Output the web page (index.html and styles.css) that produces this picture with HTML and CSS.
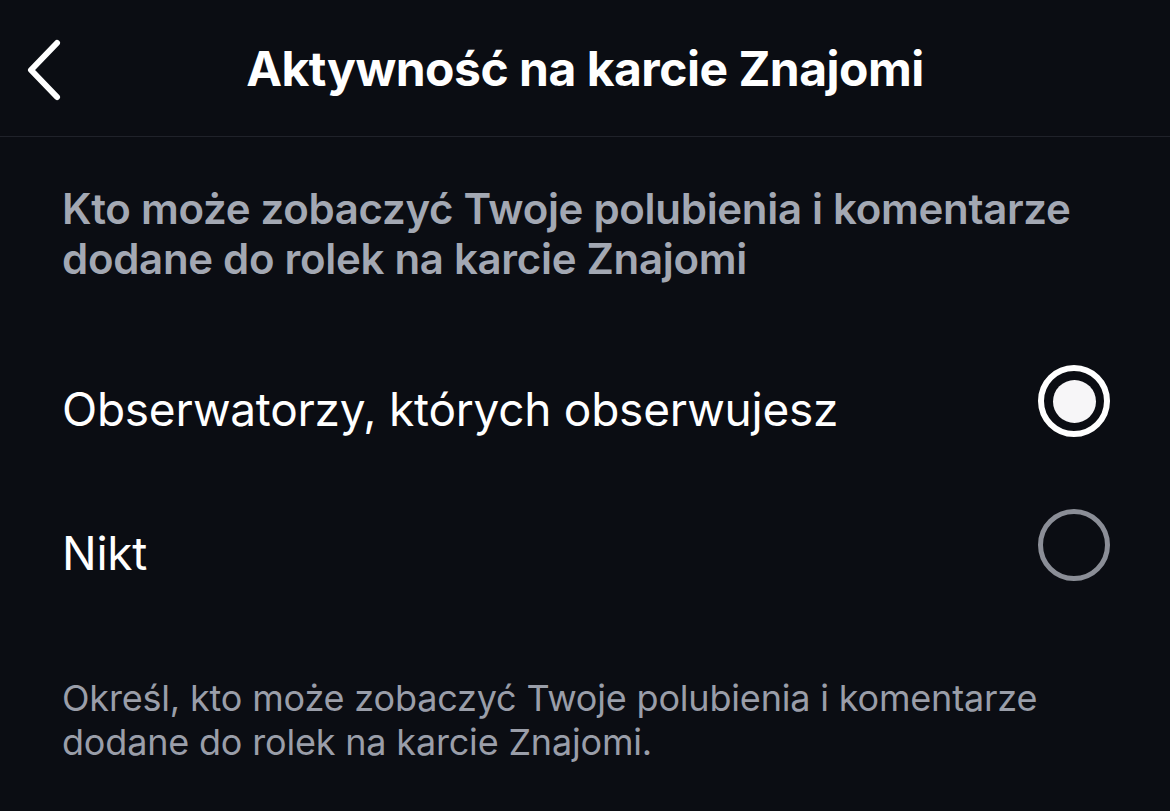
FILE: index.html
```html
<!DOCTYPE html>
<html lang="pl">
<head>
<meta charset="utf-8">
<link rel="stylesheet" href="styles.css">
</head>
<body>
<div class="screen">
  <header class="topbar">
    <button class="back" aria-label="Wstecz">
      <svg width="40" height="64" viewBox="0 0 40 64"><path d="M33 5 L7 32 L33 59" fill="none" stroke="#ffffff" stroke-width="6" stroke-linecap="round" stroke-linejoin="round"/></svg>
    </button>
    <h1 class="title">Aktywność na karcie Znajomi</h1>
  </header>
  <main class="content">
    <p class="question">Kto może zobaczyć Twoje polubienia i komentarze dodane do rolek na karcie Znajomi</p>
    <div class="options">
      <div class="option">
        <span class="label">Obserwatorzy, których obserwujesz</span>
        <span class="radio radio-on"><span class="dot"></span></span>
      </div>
      <div class="option">
        <span class="label">Nikt</span>
        <span class="radio radio-off"></span>
      </div>
    </div>
    <p class="note">Określ, kto może zobaczyć Twoje polubienia i komentarze dodane do rolek na karcie Znajomi.</p>
  </main>
</div>
</body>
</html>
```
FILE: styles.css
```css
html, body {
  margin: 0;
  padding: 0;
  background: #0b0d13;
}
body {
  font-family: Inter, "Noto Sans", "Liberation Sans", sans-serif;
  color: #ffffff;
}
.screen {
  width: 1170px;
  height: 811px;
  overflow: hidden;
}
.topbar {
  height: 136px;
  border-bottom: 1px solid #20222a;
  display: flex;
  align-items: center;
  justify-content: center;
  position: relative;
}
.back {
  position: absolute;
  left: 24px;
  top: 38px;
  background: none;
  border: 0;
  padding: 0;
  width: 40px;
  height: 64px;
}
.back svg { display: block; }
.title {
  margin: 0;
  font-size: 48px;
  font-weight: 700;
  letter-spacing: -0.5px;
  color: #ffffff;
}
.content {
  padding: 47px 60px 0 62px;
}
.question {
  margin: 0;
  font-size: 42px;
  line-height: 50px;
  font-weight: 600;
  color: #a3a8b3;
  letter-spacing: -0.3px;
}
.options {
  margin-top: 45px;
}
.option {
  height: 144px;
  display: flex;
  align-items: center;
  justify-content: space-between;
}
.label {
  font-size: 46px;
  line-height: 56px;
  padding-top: 16px;
  letter-spacing: -0.25px;
  color: #ffffff;
}
.radio {
  width: 72px;
  height: 72px;
  box-sizing: border-box;
  border-radius: 50%;
  display: flex;
  align-items: center;
  justify-content: center;
}
.radio-on {
  border: 6px solid #ffffff;
}
.radio-on .dot {
  width: 43px;
  height: 43px;
  border-radius: 50%;
  background: #f7f6f8;
}
.radio-off {
  border: 5px solid #8b8e97;
}
.note {
  margin: 59px 0 0 0;
  font-size: 36px;
  line-height: 44px;
  color: #9a9ea9;
  letter-spacing: -0.18px;
}
```
